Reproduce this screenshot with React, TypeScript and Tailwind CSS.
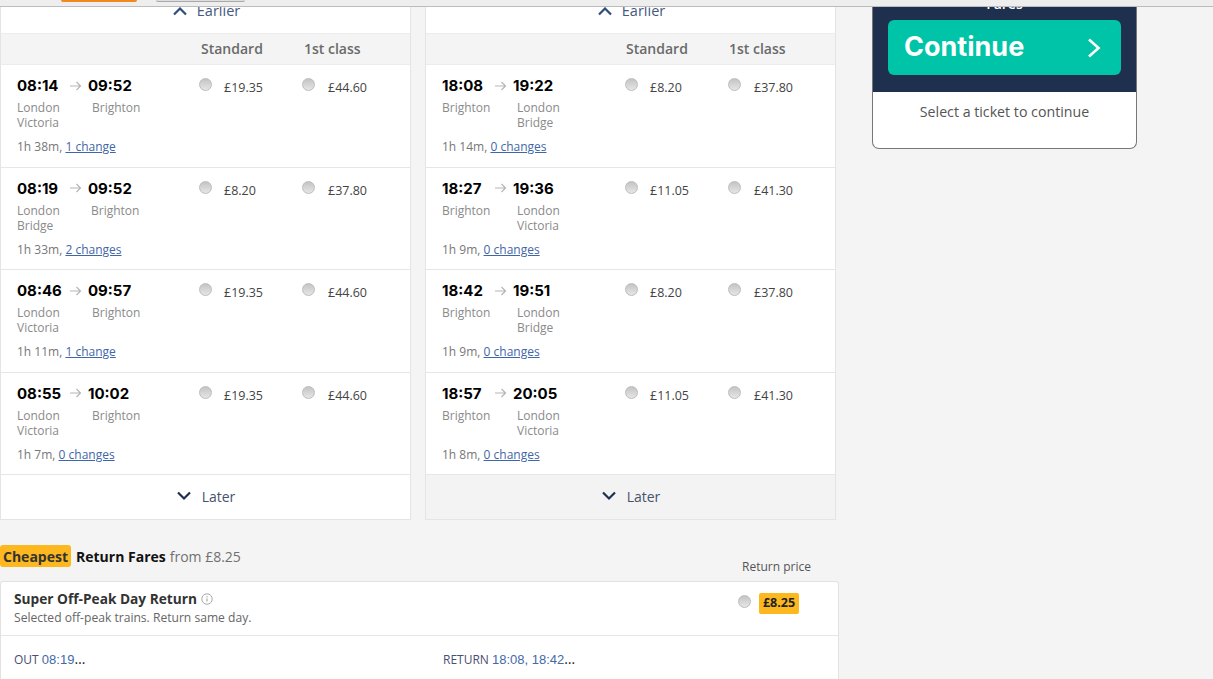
const sans = "font-['Open_Sans',sans-serif]";

type Row = {
  dep: string;
  arr: string;
  from: string;
  to: string;
  gap: string;
  duration: string;
  changes: string;
  standard: string;
  first: string;
};

const outRows: Row[] = [
  { dep: '08:14', arr: '09:52', from: 'London Victoria', to: 'Brighton', gap: 'w-[75px]', duration: '1h 38m,', changes: '1 change', standard: '£19.35', first: '£44.60' },
  { dep: '08:19', arr: '09:52', from: 'London Bridge', to: 'Brighton', gap: 'w-[74px]', duration: '1h 33m,', changes: '2 changes', standard: '£8.20', first: '£37.80' },
  { dep: '08:46', arr: '09:57', from: 'London Victoria', to: 'Brighton', gap: 'w-[75px]', duration: '1h 11m,', changes: '1 change', standard: '£19.35', first: '£44.60' },
  { dep: '08:55', arr: '10:02', from: 'London Victoria', to: 'Brighton', gap: 'w-[75px]', duration: '1h 7m,', changes: '0 changes', standard: '£19.35', first: '£44.60' },
];

const returnRows: Row[] = [
  { dep: '18:08', arr: '19:22', from: 'Brighton', to: 'London Bridge', gap: 'w-[75px]', duration: '1h 14m,', changes: '0 changes', standard: '£8.20', first: '£37.80' },
  { dep: '18:27', arr: '19:36', from: 'Brighton', to: 'London Victoria', gap: 'w-[75px]', duration: '1h 9m,', changes: '0 changes', standard: '£11.05', first: '£41.30' },
  { dep: '18:42', arr: '19:51', from: 'Brighton', to: 'London Bridge', gap: 'w-[75px]', duration: '1h 9m,', changes: '0 changes', standard: '£8.20', first: '£37.80' },
  { dep: '18:57', arr: '20:05', from: 'Brighton', to: 'London Victoria', gap: 'w-[75px]', duration: '1h 8m,', changes: '0 changes', standard: '£11.05', first: '£41.30' },
];

function Radio() {
  return (
    <span className="block w-[13px] h-[13px] shrink-0 rounded-full border border-[#bdbdbd] bg-gradient-to-b from-[#c4c4c4] to-[#e6e6e6]" />
  );
}

function Chevron({ up, color }: { up?: boolean; color: string }) {
  return (
    <svg width="16" height="10" viewBox="0 0 16 10" fill="none" stroke={color} strokeWidth="2.2">
      <path d={up ? 'M2 8.5 8 2.5l6 6' : 'M2 1.5l6 6 6-6'} />
    </svg>
  );
}

function TrainRow({ row, infoWidth }: { row: Row; infoWidth: string }) {
  return (
    <div className="flex h-[102.5px] border-b border-[#e6e6e6] pl-[16px] pt-[11.6px] text-[12px] leading-[15px]">
      <div className={`${infoWidth} shrink-0`}>
        <div className="flex items-center h-[18px] font-['Inter',sans-serif] font-bold text-[15px] text-black">
          <span className="w-[53px]">{row.dep}</span>
          <svg className="w-[18px]" width="18" height="10" viewBox="0 0 18 10" fill="none" stroke="#b5b5b5" strokeWidth="1.2">
            <path d="M0 5h10M6.5 1l4 4-4 4" />
          </svg>
          <span>{row.arr}</span>
        </div>
        <div className="flex mt-[5.7px] text-[#8a8a8a]">
          <div className={`${row.gap} shrink-0 pr-[12px]`}>{row.from}</div>
          <div className="w-[60px]">{row.to}</div>
        </div>
        <div className="mt-[9px] text-[#777]">
          {row.duration}{' '}
          <a className="text-[#3f66a8] underline">{row.changes}</a>
        </div>
      </div>
      <div className="flex w-[103px] shrink-0 pt-[1.7px]">
        <Radio />
        <span className="ml-[12px] mt-[2px] text-[12.5px] text-[#444]">{row.standard}</span>
      </div>
      <div className="flex pt-[1.7px]">
        <Radio />
        <span className="ml-[13px] mt-[2px] text-[12.5px] text-[#444]">{row.first}</span>
      </div>
    </div>
  );
}

function Journey({ rows, laterBg, infoWidth }: { rows: Row[]; laterBg: string; infoWidth: string }) {
  return (
    <div className="w-[411px] border border-t-0 border-[#e4e4e4] bg-white">
      <div className="flex items-start justify-center gap-[9px] h-[26px] overflow-hidden text-[14.5px] text-[#45597f]">
        <span className="ml-[1px] mt-[-1px]">
          <Chevron up color="#2f4d7e" />
        </span>
        <span className="-mt-[6px] leading-[20px]">Earlier</span>
      </div>
      <div className="flex h-[32px] items-center border-y border-[#ececec] bg-[#f4f4f4] pb-[2px] text-[14px] font-semibold text-[#6a6a6a]">
        <span className="ml-[200px] w-[103px]">Standard</span>
        <span>1st class</span>
      </div>
      {rows.map((row) => (
        <TrainRow key={row.dep} row={row} infoWidth={infoWidth} />
      ))}
      <div className={`flex h-[44px] items-center justify-center gap-[10px] pb-[2px] text-[14px] text-[#45536b] ${laterBg}`}>
        <Chevron color="#1f2f4e" />
        <span>Later</span>
      </div>
    </div>
  );
}

export default function App() {
  return (
    <div className={`${sans} h-[679px] w-[1213px] overflow-hidden bg-[#f4f4f4]`}>
      <div className="relative h-[7px] border-b border-[#bcbcbc] bg-[#eeeeee]">
        <div className="absolute left-[61px] top-0 h-[2px] w-[76px] rounded-b-[3px] bg-[#f08a1d]" />
        <div className="absolute left-[156px] top-0 h-[2px] w-[89px] rounded-b-[3px] border-b border-[#a8a8a8] bg-[#dedede]" />
      </div>

      <div className="flex items-start">
        <div className="w-[840px] shrink-0">
          <div className="flex gap-[14px]">
            <Journey rows={outRows} laterBg="bg-white" infoWidth="w-[182px]" />
            <Journey rows={returnRows} laterBg="bg-[#f3f3f3]" infoWidth="w-[183px]" />
          </div>

          <div className="relative mt-[25px] flex h-[22px] items-center text-[14px]">
            <span className="flex h-[22px] w-[71px] items-center justify-center rounded-[3px] bg-[#fdb71f] font-bold text-[#333]">
              Cheapest
            </span>
            <span className="ml-[5px] font-bold text-[#111]">Return Fares</span>
            <span className="ml-[4px] text-[#707070]">from £8.25</span>
            <span className="absolute left-[742px] top-[13px] text-[12px] text-[#555]">Return price</span>
          </div>

          <div className="mt-[14px] h-[110px] w-[839px] rounded-t-[3px] border border-b-0 border-[#e2e2e2] bg-white">
            <div className="flex h-[54px] border-b border-[#e6e6e6] pl-[13px]">
              <div className="w-[724px] shrink-0 pt-[7px]">
                <div className="flex items-center gap-[4px] text-[13.7px] font-bold leading-[19px] text-[#333]">
                  Super Off-Peak Day Return
                  <svg width="12" height="12" viewBox="0 0 12 12" fill="none" stroke="#aaa">
                    <circle cx="6" cy="6" r="5.2" />
                    <path d="M6 5.5v3M6 3.2v1.2" strokeWidth="1.2" />
                  </svg>
                </div>
                <div className="mt-[2px] text-[12.1px] leading-[16px] text-[#666]">
                  Selected off-peak trains. Return same day.
                </div>
              </div>
              <div className="flex items-start pt-[13px]">
                <Radio />
                <span className="-mt-[2px] ml-[8px] flex h-[21px] w-[40px] items-center justify-center rounded-[2px] bg-[#fdb71f] text-[12.5px] font-bold text-[#222]">
                  £8.25
                </span>
              </div>
            </div>
            <div className="flex items-baseline pl-[13px] pt-[14px] text-[12px] leading-[18px]">
              <div className="w-[429px] shrink-0 text-[#4a4f73]">
                OUT{' '}
                <span className="font-['Liberation_Sans',sans-serif] text-[13px] text-[#4469a8]">08:19</span>
                <span className="text-[14px] text-[#222]">…</span>
              </div>
              <div className="text-[#4a4f73]">
                RETURN{' '}
                <span className="font-['Liberation_Sans',sans-serif] text-[13px] text-[#4469a8]">18:08, 18:42</span>
                <span className="text-[14px] text-[#222]">…</span>
              </div>
            </div>
          </div>
        </div>

        <aside className="ml-[32px] w-[265px] overflow-hidden rounded-b-[7px] border-x border-b border-[#777] bg-white">
          <div className="h-[85px] bg-[#1f2f4e] px-[15px]">
            <div className="h-[13px] overflow-hidden text-center text-[14px] font-semibold leading-[18px] text-white">
              <div className="-mt-[12px]">Fares</div>
            </div>
            <button className="flex h-[55px] w-[233px] items-center justify-between rounded-[6px] bg-[#00c4a7] pl-[16px] pr-[19px] font-['Inter',sans-serif] text-[27px] font-bold text-white">
              Continue
              <svg width="16" height="24" viewBox="0 0 16 24" fill="none" stroke="white" strokeWidth="2.6">
                <path d="M3 3.5 12.5 12 3 20.5" />
              </svg>
            </button>
          </div>
          <div className="h-[56px] pt-[10px] text-center text-[14.2px] leading-[20px] text-[#555]">
            Select a ticket to continue
          </div>
        </aside>
      </div>
    </div>
  );
}
